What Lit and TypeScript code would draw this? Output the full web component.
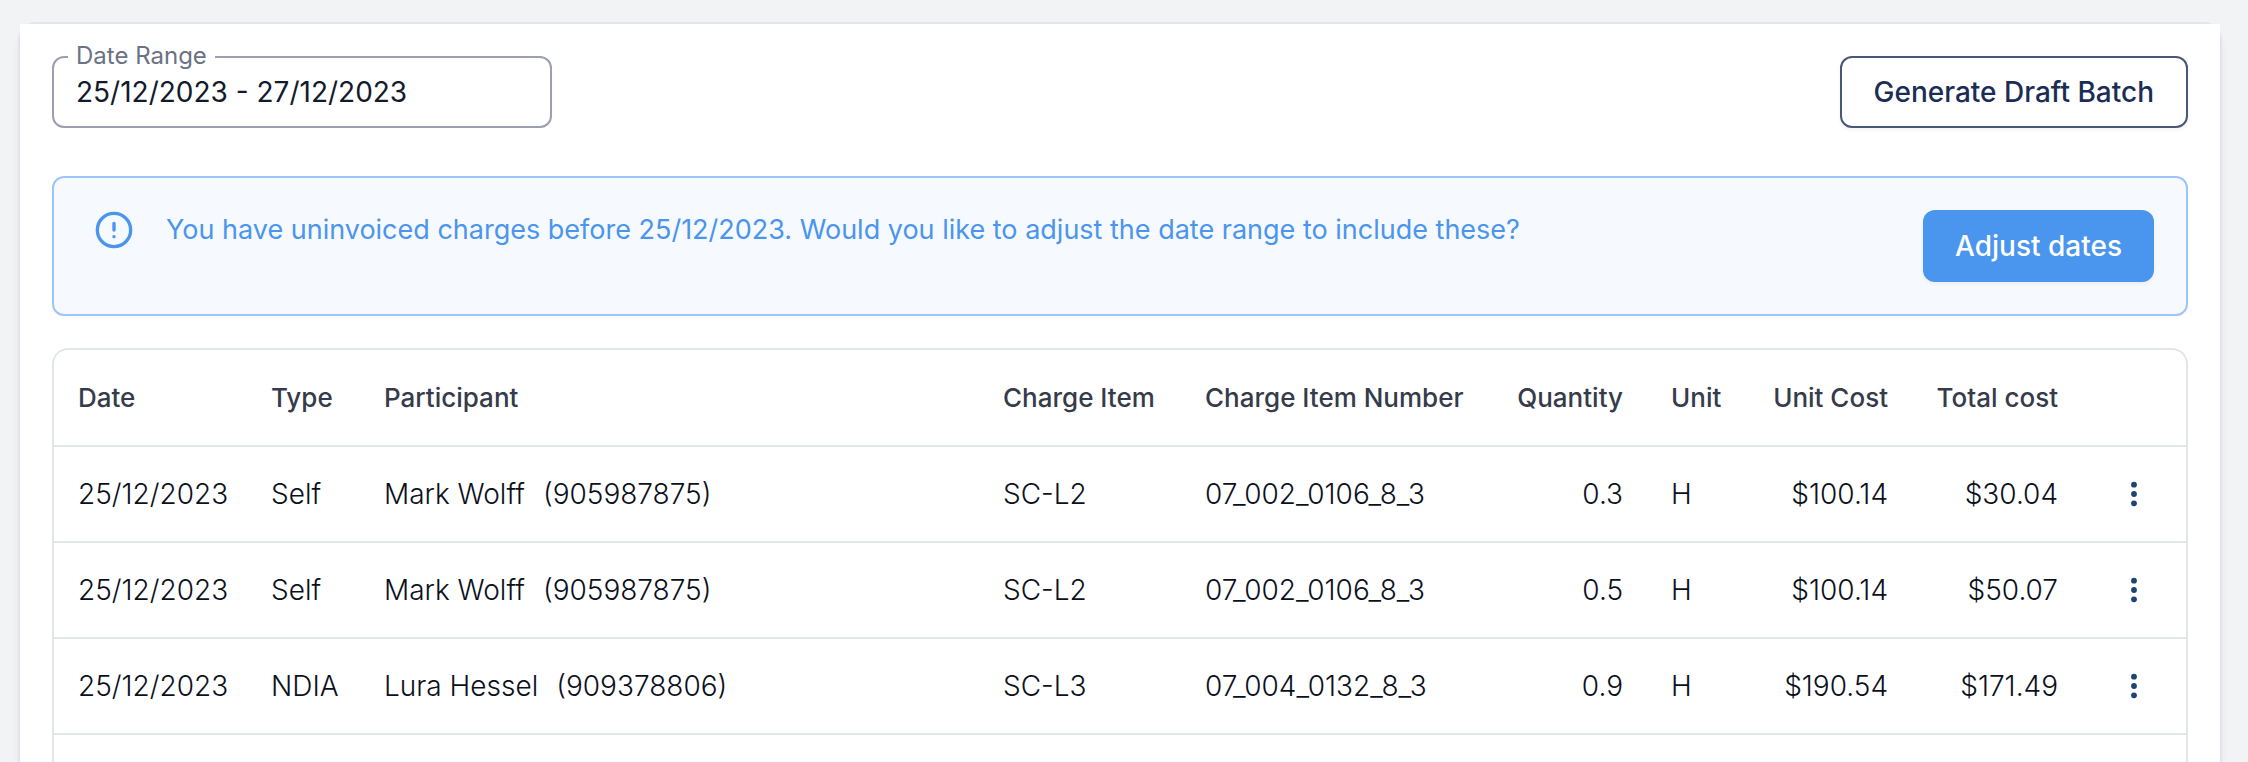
import { LitElement, html, css } from "lit";
import { customElement, property, state } from "lit/decorators.js";

interface Charge {
  date: string;
  type: string;
  participant: string;
  participantId: string;
  item: string;
  itemNumber: string;
  quantity: string;
  unit: string;
  unitCost: string;
  totalCost: string;
}

const CHARGES: Charge[] = [
  {
    date: "25/12/2023",
    type: "Self",
    participant: "Mark Wolff",
    participantId: "905987875",
    item: "SC-L2",
    itemNumber: "07_002_0106_8_3",
    quantity: "0.3",
    unit: "H",
    unitCost: "$100.14",
    totalCost: "$30.04",
  },
  {
    date: "25/12/2023",
    type: "Self",
    participant: "Mark Wolff",
    participantId: "905987875",
    item: "SC-L2",
    itemNumber: "07_002_0106_8_3",
    quantity: "0.5",
    unit: "H",
    unitCost: "$100.14",
    totalCost: "$50.07",
  },
  {
    date: "25/12/2023",
    type: "NDIA",
    participant: "Lura Hessel",
    participantId: "909378806",
    item: "SC-L3",
    itemNumber: "07_004_0132_8_3",
    quantity: "0.9",
    unit: "H",
    unitCost: "$190.54",
    totalCost: "$171.49",
  },
];

@customElement("charges-banner")
export class ChargesBanner extends LitElement {
  @property() before = "";

  static styles = css`
    :host {
      display: block;
    }
    .banner {
      display: flex;
      align-items: flex-start;
      gap: 32px;
      padding: 32px 32px 32px 40px;
      border: 2px solid #9cc5f8;
      border-radius: 12px;
      background: #f6f9fe;
      color: #4a95ed;
    }
    .icon {
      flex: none;
      width: 40px;
      height: 40px;
    }
    .message {
      flex: 1;
      margin: 0;
      font-size: 27px;
      line-height: 40px;
    }
    .action {
      flex: none;
      height: 72px;
      padding: 0 32px;
      border: 0;
      border-radius: 12px;
      background: #4a95ed;
      color: #ffffff;
      font: 500 28px/40px Inter, sans-serif;
      box-shadow: 0 2px 4px rgba(0, 0, 0, 0.05);
      cursor: pointer;
    }
  `;

  render() {
    return html`
      <div class="banner" role="status">
        <svg
          class="icon"
          viewBox="0 0 24 24"
          fill="none"
          stroke="currentColor"
          stroke-width="2"
          stroke-linecap="round"
          aria-hidden="true"
        >
          <circle cx="12" cy="12" r="10"></circle>
          <path d="M12 8v4M12 16h.01"></path>
        </svg>
        <p class="message">
          You have uninvoiced charges before ${this.before}. Would you like to
          adjust the date range to include these?
        </p>
        <button class="action" type="button">Adjust dates</button>
      </div>
    `;
  }
}

@customElement("charges-table")
export class ChargesTable extends LitElement {
  @property({ attribute: false }) charges: Charge[] = [];

  static styles = css`
    :host {
      display: block;
    }
    .frame {
      border: 2px solid #e2e7ec;
      border-radius: 16px 16px 0 0;
      border-bottom: 0;
    }
    .table {
      width: 100%;
      border-collapse: separate;
      border-spacing: 0;
      table-layout: fixed;
      font-size: 28px;
      line-height: 40px;
    }
    .date { width: 193px; }
    .type { width: 113px; }
    .item { width: 202px; }
    .number { width: 311px; }
    .quantity { width: 155px; }
    .unit { width: 100px; }
    .unit-cost { width: 165px; }
    .total { width: 170px; }
    .menu { width: 104px; }
    .head,
    .cell {
      height: 94px;
      padding: 0 0 0 24px;
      border-bottom: 2px solid #e2e7ec;
      text-align: left;
      white-space: nowrap;
    }
    .head {
      height: 95px;
      color: #353b4a;
      font-size: 26px;
      font-weight: 500;
    }
    .cell {
      color: #0b1020;
      font-weight: 300;
    }
    .amount {
      padding: 0 24px 0 0;
      text-align: right;
    }
    .person {
      display: flex;
      gap: 18px;
    }
    .more {
      display: flex;
      align-items: center;
      justify-content: center;
      width: 56px;
      height: 56px;
      padding: 0;
      border: 0;
      background: none;
      color: #1c4477;
      cursor: pointer;
    }
    .dots {
      width: 32px;
      height: 32px;
    }
    .next {
      height: 28px;
    }
  `;

  render() {
    return html`
      <div class="frame">
        <table class="table">
          <colgroup>
            <col class="date" />
            <col class="type" />
            <col />
            <col class="item" />
            <col class="number" />
            <col class="quantity" />
            <col class="unit" />
            <col class="unit-cost" />
            <col class="total" />
            <col class="menu" />
          </colgroup>
          <thead>
            <tr>
              <th class="head" scope="col">Date</th>
              <th class="head" scope="col">Type</th>
              <th class="head" scope="col">Participant</th>
              <th class="head" scope="col">Charge Item</th>
              <th class="head" scope="col">Charge Item Number</th>
              <th class="head amount" scope="col">Quantity</th>
              <th class="head" scope="col">Unit</th>
              <th class="head amount" scope="col">Unit Cost</th>
              <th class="head amount" scope="col">Total cost</th>
              <td class="head"></td>
            </tr>
          </thead>
          <tbody>
            ${this.charges.map(
              (c) => html`
                <tr>
                  <td class="cell">${c.date}</td>
                  <td class="cell">${c.type}</td>
                  <td class="cell">
                    <div class="person">
                      <span>${c.participant}</span>
                      <span>(${c.participantId})</span>
                    </div>
                  </td>
                  <td class="cell">${c.item}</td>
                  <td class="cell">${c.itemNumber}</td>
                  <td class="cell amount">${c.quantity}</td>
                  <td class="cell">${c.unit}</td>
                  <td class="cell amount">${c.unitCost}</td>
                  <td class="cell amount">${c.totalCost}</td>
                  <td class="cell">
                    <button class="more" type="button" aria-label="Charge actions">
                      <svg class="dots" viewBox="0 0 32 32" fill="currentColor" aria-hidden="true">
                        <circle cx="16" cy="6.7" r="2.9"></circle>
                        <circle cx="16" cy="16" r="2.9"></circle>
                        <circle cx="16" cy="25.3" r="2.9"></circle>
                      </svg>
                    </button>
                  </td>
                </tr>
              `
            )}
          </tbody>
        </table>
        <div class="next"></div>
      </div>
    `;
  }
}

@customElement("app-root")
export class AppRoot extends LitElement {
  @state() private from = "25/12/2023";
  @state() private to = "27/12/2023";

  static styles = css`
    :host {
      display: flex;
      box-sizing: border-box;
      height: 100vh;
      padding: 24px 28px 0 20px;
      overflow: hidden;
      background: #f2f3f5;
      color: #131a2c;
      font-family: Inter, sans-serif;
    }
    .shell {
      display: flex;
      flex: 1;
      min-width: 0;
      border-radius: 16px 16px 0 0;
      box-shadow: 0 0 0 2px #e2e6eb, 0 6px 10px rgba(50, 70, 100, 0.08);
    }
    .card {
      flex: 1;
      min-width: 0;
      padding: 32px 32px 0;
      background: #ffffff;
    }
    .toolbar {
      display: flex;
      justify-content: space-between;
      margin-bottom: 48px;
    }
    .field {
      position: relative;
      width: 500px;
    }
    .label {
      position: absolute;
      top: -16px;
      left: 16px;
      padding: 0 8px;
      background: #ffffff;
      color: #6b7284;
      font-size: 24px;
      line-height: 32px;
    }
    .input {
      box-sizing: border-box;
      width: 100%;
      height: 72px;
      padding: 0 22px;
      border: 2px solid #9b9fb0;
      border-radius: 12px;
      background: none;
      color: inherit;
      font: 400 28px/40px Inter, sans-serif;
    }
    .generate {
      height: 72px;
      padding: 0 32px;
      border: 2px solid #4b5779;
      border-radius: 12px;
      background: #ffffff;
      color: #1c2d55;
      font: 500 28px/40px Inter, sans-serif;
      box-shadow: 0 2px 4px rgba(0, 0, 0, 0.05);
      cursor: pointer;
    }
    .charges {
      margin-top: 32px;
    }
  `;

  render() {
    return html`
      <div class="shell">
        <main class="card">
          <div class="toolbar">
            <div class="field">
              <input class="input" id="range" type="text" .value=${`${this.from} - ${this.to}`} />
              <label class="label" for="range">Date Range</label>
            </div>
            <button class="generate" type="button">Generate Draft Batch</button>
          </div>
          <charges-banner .before=${this.from}></charges-banner>
          <charges-table class="charges" .charges=${CHARGES}></charges-table>
        </main>
      </div>
    `;
  }
}
